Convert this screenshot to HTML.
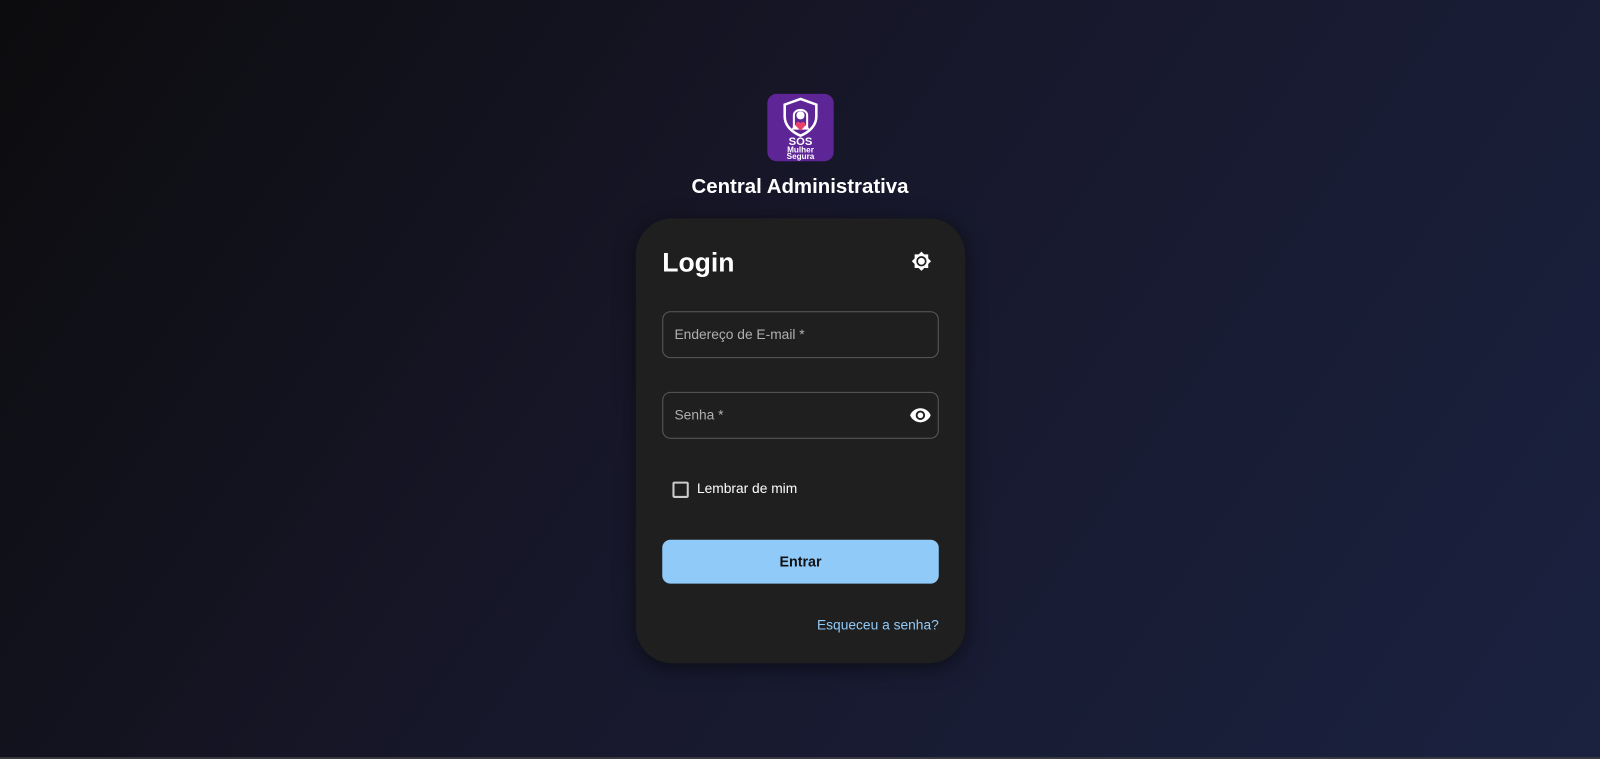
<!DOCTYPE html>
<html><head><meta charset="utf-8"><style>
html,body{margin:0;padding:0;width:1600px;height:759px;overflow:hidden;background:#15152a}
#w{position:absolute;left:0;top:0;width:1568px;height:744px;transform:scale(1.020408);transform-origin:0 0;background:linear-gradient(125deg,#0c0c0e 0%,#17172a 45%,#1a2240 100%);font-family:"Liberation Sans",Arial,sans-serif}
.bottom{position:absolute;left:0;right:0;bottom:0;height:2px;background:#3a3a40}
.logo{position:absolute;left:752px;top:92px;width:65px;height:66px;border-radius:9px;background:#5e2596}
.title{position:absolute;left:0;width:1568px;top:172px;text-align:center;color:#fff;font-weight:bold;font-size:20px}
.card{position:absolute;left:623px;top:214px;width:323px;height:436px;border-radius:36px;background:#1f1f1f;box-shadow:0 4px 20px rgba(0,0,0,.5)}
.h{position:absolute;left:26px;top:28px;color:#fff;font-weight:bold;font-size:26px}
.field{position:absolute;left:26px;width:271px;height:46px;border:1px solid #5a5a5a;border-radius:8px;box-sizing:border-box}
.field span{position:absolute;left:11px;top:14px;color:#b0b0b0;font-size:13.5px}
.cb{position:absolute;left:36px;top:258px;width:12px;height:12px;border:2px solid #ccc;border-radius:2px}
.cbl{position:absolute;left:60px;top:257px;color:#fff;font-size:13.5px}
.btn{position:absolute;left:26px;top:315px;width:271px;height:43px;border-radius:8px;background:#90caf9;color:#111;font-weight:bold;font-size:14px;text-align:center;line-height:43px}
.link{position:absolute;right:26px;top:391px;color:#90caf9;font-size:13.5px}
</style></head><body><div id="w">
<div class="logo"><svg width="65" height="66" viewBox="0 0 65 66">
<path d="M32.5 5 L48 10.5 V22 C48 31 41 37.5 32.5 41 C24 37.5 17 31 17 22 V10.5 Z" fill="none" stroke="#fff" stroke-width="2.5"/>
<path d="M26 33 V21 C26 14 39 14 39 21 V33" fill="none" stroke="#fff" stroke-width="2"/>
<circle cx="32.5" cy="21" r="4" fill="#fff"/>
<path d="M24 35 C25 28 40 28 41 35 Z" fill="#fff"/>
<path d="M32.5 36 l-4.5 -4.5 a2.5 2.5 0 0 1 4.5 -2.8 a2.5 2.5 0 0 1 4.5 2.8 z" fill="#e8406a"/>
<text x="32.5" y="50" text-anchor="middle" fill="#fff" font-size="11" font-weight="bold" font-family="Liberation Sans">SOS</text>
<text x="32.5" y="57.5" text-anchor="middle" fill="#fff" font-size="8" font-weight="bold" font-family="Liberation Sans">Mulher</text>
<text x="32.5" y="64" text-anchor="middle" fill="#fff" font-size="8" font-weight="bold" font-family="Liberation Sans">Segura</text>
</svg></div>
<div class="title">Central Administrativa</div>
<div class="card">
<div class="h">Login</div>
<svg style="position:absolute;left:270px;top:32px" width="20" height="20" viewBox="0 0 24 24"><path fill="#fff" fill-rule="evenodd" d="M20 8.69V4h-4.69L12 .69 8.69 4H4v4.69L.69 12 4 15.31V20h4.69L12 23.31 15.31 20H20v-4.69L23.31 12 20 8.69zM12 18c-3.31 0-6-2.69-6-6s2.69-6 6-6 6 2.69 6 6-2.69 6-6 6zm0-10c-2.21 0-4 1.79-4 4s1.79 4 4 4 4-1.79 4-4-1.79-4-4-4z"/></svg>
<div class="field" style="top:91px"><span>Endereço de E-mail *</span></div>
<div class="field" style="top:170px"><span>Senha *</span>
<svg style="position:absolute;right:6px;top:11px" width="22" height="22" viewBox="0 0 24 24"><path fill="#fff" d="M12 4.5C7 4.5 2.73 7.61 1 12c1.73 4.39 6 7.5 11 7.5s9.27-3.11 11-7.5c-1.73-4.39-6-7.5-11-7.5zM12 17c-2.76 0-5-2.24-5-5s2.24-5 5-5 5 2.24 5 5-2.24 5-5 5zm0-8c-1.66 0-3 1.34-3 3s1.34 3 3 3 3-1.34 3-3-1.34-3-3-3z"/></svg></div>
<div class="cb"></div><div class="cbl">Lembrar de mim</div>
<div class="btn">Entrar</div>
<div class="link">Esqueceu a senha?</div>
</div>
<div class="bottom"></div>
</div></body></html>
